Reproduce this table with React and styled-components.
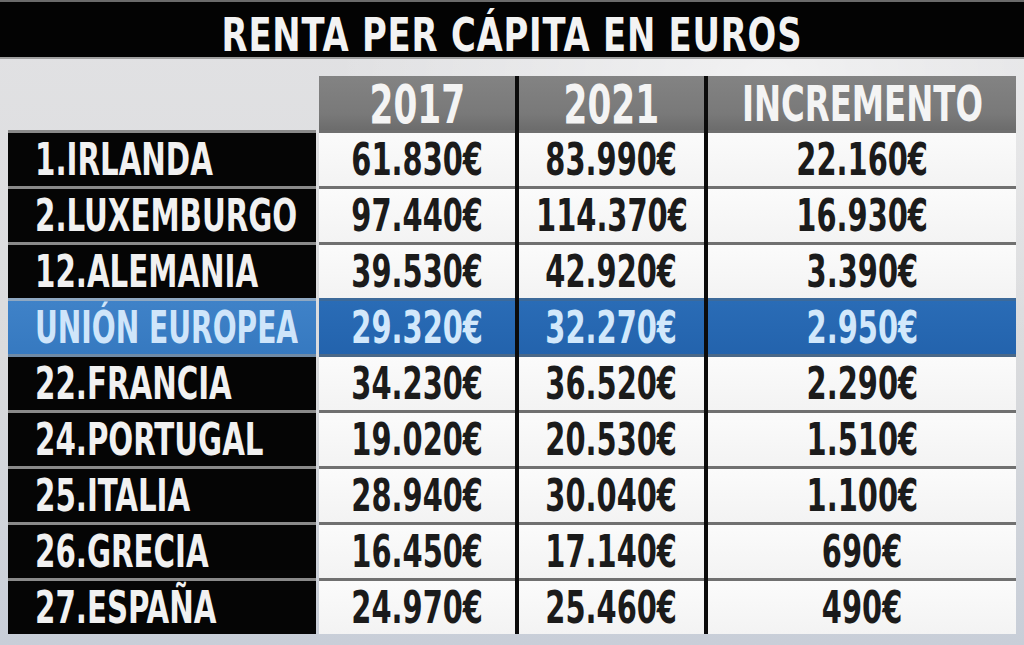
import React from 'react';
import styled, { createGlobalStyle } from 'styled-components';

const Global = createGlobalStyle`
  html, body { margin: 0; padding: 0; }
  body {
    width: 1024px; height: 645px; overflow: hidden;
    font-family: "DejaVu Sans Condensed", "DejaVu Sans", sans-serif;
    font-stretch: condensed;
  }
`;

const Page = styled.div`
  width: 1024px;
  height: 645px;
  display: flex;
  flex-direction: column;
  background:
    radial-gradient(ellipse at 75% 12%, rgba(255,255,255,0.55), rgba(255,255,255,0) 40%),
    linear-gradient(180deg, #e2e2e4 0%, #dadbdd 55%, #c8ced8 100%);
`;

const TitleBar = styled.header`
  height: 59px;
  box-sizing: border-box;
  padding-top: 10px;
  background: #030303;
  border-top: 2px solid #6a6a6a;
  border-bottom: 2px solid #a0a0a0;
  display: flex;
  align-items: center;
  justify-content: center;
`;

const Text = styled.span`
  display: inline-block;
  white-space: nowrap;
  font-weight: 700;
  line-height: 1;
  font-size: ${p => p.$size}px;
  letter-spacing: ${p => p.$ls || 0}px;
  color: ${p => p.$color};
  transform: scaleX(${p => p.$sx});
  transform-origin: ${p => p.$origin || 'center'};
`;

const Table = styled.div`
  display: flex;
  flex-direction: column;
  padding: 17px 8px 0 8px;
`;

const Row = styled.div`
  display: flex;
  height: ${p => p.$h}px;
`;

const LabelCell = styled.div`
  width: 308px;
  box-sizing: border-box;
  padding-left: 27px;
  display: flex;
  align-items: center;
  background: ${p => (p.$blank ? 'transparent' : p.$bg)};
  border-top: ${p => (p.$blank ? 'none' : `3px solid ${p.$sep}`)};
`;

const Gap = styled.div`
  width: ${p => p.$w}px;
`;

const ValueCell = styled.div`
  width: ${p => p.$w}px;
  box-sizing: border-box;
  display: flex;
  align-items: center;
  justify-content: center;
  background: ${p => p.$bg};
  border-top: ${p => (p.$sep ? `3px solid ${p.$sep}` : 'none')};
`;

const HeaderCell = styled.div`
  width: ${p => p.$w}px;
  box-sizing: border-box;
  display: flex;
  align-items: center;
  justify-content: center;
  padding-top: 2px;
  background: linear-gradient(180deg, #838383 0%, #797979 70%, #6c6c6c 100%);
`;

const Divider = styled.div`
  width: 4px;
  background: #0b0b0b;
`;

const W = [196, 185, 308];

const rows = [
  ['1.IRLANDA', '61.830€', '83.990€', '22.160€'],
  ['2.LUXEMBURGO', '97.440€', '114.370€', '16.930€'],
  ['12.ALEMANIA', '39.530€', '42.920€', '3.390€'],
  ['UNIÓN EUROPEA', '29.320€', '32.270€', '2.950€', true],
  ['22.FRANCIA', '34.230€', '36.520€', '2.290€'],
  ['24.PORTUGAL', '19.020€', '20.530€', '1.510€'],
  ['25.ITALIA', '28.940€', '30.040€', '1.100€'],
  ['26.GRECIA', '16.450€', '17.140€', '690€'],
  ['27.ESPAÑA', '24.970€', '25.460€', '490€'],
];

function DataRow({ label, values, blue, afterBlue }) {
  const labelBg = blue ? 'linear-gradient(180deg, #3f82c8, #3679c0)' : '#050505';
  const labelSep = blue ? '#8fa8c2' : afterBlue ? '#6f8aa6' : '#8a8a8a';
  const valBg = blue ? 'linear-gradient(180deg, #2a6cb6, #2363ad)' : 'linear-gradient(180deg, #fbfbfb, #f3f3f3)';
  const valSep = blue ? '#3d6a9a' : afterBlue ? '#4a6888' : '#707070';
  const txt = blue ? '#d2e8fb' : '#1b1b1b';
  return (
    <Row $h={56}>
      <LabelCell $bg={labelBg} $sep={labelSep}>
        <Text $size={44} $sx={blue ? 0.71 : 0.74} $origin="left center" $color={blue ? '#cfe5fa' : '#f1f1f1'}>
          {label}
        </Text>
      </LabelCell>
      <Gap $w={3} />
      {values.map((v, i) => (
        <React.Fragment key={i}>
          <ValueCell $w={W[i]} $bg={valBg} $sep={valSep}>
            <Text $size={44} $sx={0.73} $color={txt}>{v}</Text>
          </ValueCell>
          {i < 2 && <Divider />}
        </React.Fragment>
      ))}
    </Row>
  );
}

export default function App() {
  return (
    <>
      <Global />
      <Page>
        <TitleBar>
          <Text $size={47} $sx={0.8} $ls={1} $color="#f3f3f3">RENTA PER CÁPITA EN EUROS</Text>
        </TitleBar>
        <Table>
          <Row $h={54}>
            <LabelCell $blank />
            <Gap $w={3} />
            <HeaderCell $w={W[0]}>
              <Text $size={53} $sx={0.72} $color="#f4f4f4">2017</Text>
            </HeaderCell>
            <Divider />
            <HeaderCell $w={W[1]}>
              <Text $size={53} $sx={0.72} $color="#f4f4f4">2021</Text>
            </HeaderCell>
            <Divider />
            <HeaderCell $w={W[2]}>
              <Text $size={50} $sx={0.72} $color="#f4f4f4">INCREMENTO</Text>
            </HeaderCell>
          </Row>
          {rows.map((r, idx) => (
            <DataRow
              key={r[0]}
              label={r[0]}
              values={r.slice(1, 4)}
              blue={!!r[4]}
              afterBlue={idx > 0 && !!rows[idx - 1][4]}
            />
          ))}
        </Table>
      </Page>
    </>
  );
}
